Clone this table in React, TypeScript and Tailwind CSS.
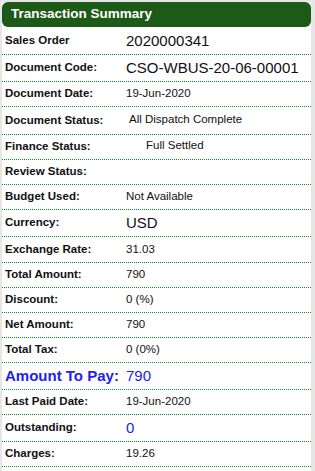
const rows: { label: string; value: string; h: string; big?: boolean; blue?: boolean; pad?: string }[] = [
  { label: "Sales Order", value: "2020000341", h: "h-[27px]", big: true },
  { label: "Document Code:", value: "CSO-WBUS-20-06-00001", h: "h-[27px]", big: true },
  { label: "Document Date:", value: "19-Jun-2020", h: "h-[25px]" },
  { label: "Document Status:", value: "All Dispatch Complete", h: "h-[28px]", pad: "pl-[3px] -mt-[2px]" },
  { label: "Finance Status:", value: "Full Settled", h: "h-[25px]", pad: "pl-[20px] -mt-[2px]" },
  { label: "Review Status:", value: "", h: "h-[25px]" },
  { label: "Budget Used:", value: "Not Available", h: "h-[25px]" },
  { label: "Currency:", value: "USD", h: "h-[27px]", big: true },
  { label: "Exchange Rate:", value: "31.03", h: "h-[26px]" },
  { label: "Total Amount:", value: "790", h: "h-[25px]" },
  { label: "Discount:", value: "0 (%)", h: "h-[25px]" },
  { label: "Net Amount:", value: "790", h: "h-[25px]" },
  { label: "Total Tax:", value: "0 (0%)", h: "h-[25px]" },
];

const rows2: typeof rows = [
  { label: "Last Paid Date:", value: "19-Jun-2020", h: "h-[25px]" },
  { label: "Outstanding:", value: "0", h: "h-[27px]", big: true, blue: true },
  { label: "Charges:", value: "19.26", h: "h-[25px]" },
];

function Row({ r }: { r: (typeof rows)[number] }) {
  return (
    <div className={`flex items-center whitespace-nowrap border-b border-dotted border-[#0b8a26] ${r.h}`}>
      <div className="w-[124px] shrink-0 pl-[3px] text-[11.5px] font-bold text-[#111]">{r.label}</div>
      <div
        className={`${r.pad ?? ""} ${r.big ? "text-[15px]" : "text-[11.5px]"} ${r.blue ? "text-[#2222ee]" : "text-[#111]"}`}
      >
        {r.value}
      </div>
    </div>
  );
}

export default function App() {
  return (
    <div className="h-[471px] w-[315px] bg-[#e6e6e6] pl-[2px] pr-[4px] pt-[2px] font-['Liberation_Sans',Arial,sans-serif]">
      <div className="h-full bg-white">
        <div className="flex h-[25px] items-center rounded-[6px] bg-[#1d5a18] pl-[9px] text-[13.5px] font-bold text-white">
          Transaction Summary
        </div>
        <div className="pt-px">
          {rows.map((r) => (
            <Row key={r.label} r={r} />
          ))}
          <div className="flex h-[27px] items-center whitespace-nowrap border-b border-dotted border-[#0b8a26] text-[#2222ee]">
            <div className="w-[124px] shrink-0 pl-[3px] text-[15px] font-bold">Amount To Pay:</div>
            <div className="text-[15px]">790</div>
          </div>
          {rows2.map((r) => (
            <Row key={r.label} r={r} />
          ))}
        </div>
      </div>
    </div>
  );
}
